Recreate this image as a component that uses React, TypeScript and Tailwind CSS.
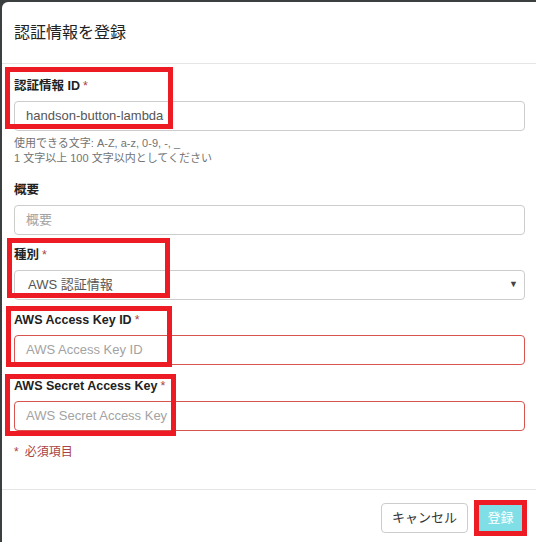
import React from "react";

const font = { fontFamily: '"Liberation Sans", "Noto Sans CJK JP", sans-serif' };

function Label({ text, required }: { text: string; required?: boolean }) {
  return (
    <div className="h-[18px] leading-[18px] text-[12.5px] font-bold text-[#222]">
      {text}
      {required && <span className="ml-[3px] font-normal text-[#a94442]">*</span>}
    </div>
  );
}

function Field({
  value,
  placeholder,
  invalid,
}: {
  value?: string;
  placeholder?: string;
  invalid?: boolean;
}) {
  return (
    <div
      className={`mt-[6px] h-[30px] rounded-[4px] border px-[11px] flex items-center text-[13px] ${
        invalid ? "border-[#d9534f]" : "border-[#cccccc]"
      } ${value ? "text-[#555]" : "text-[#a3a3a3]"}`}
    >
      {value ?? placeholder}
    </div>
  );
}

// red annotation frames drawn on top of the screenshot
const marks = [
  "left-[5px] top-[67px] w-[168px] h-[62px]",
  "left-[7px] top-[238px] w-[163px] h-[60px]",
  "left-[6px] top-[306px] w-[166px] h-[61px]",
  "left-[5px] top-[374px] w-[171px] h-[62px]",
  "left-[474px] top-[500px] w-[53px] h-[36px]",
];

export default function App() {
  return (
    <div
      className="relative w-[536px] h-[542px] overflow-hidden bg-[#3b3f3f] pl-[2px] pt-[2px] flex"
      style={font}
    >
      <div className="w-[536px] shrink-0 bg-white rounded-tl-[6px] flex flex-col">
        {/* header */}
        <div className="h-[62px] border-b border-[#e5e5e5] pl-[12px] flex items-center">
          <h1 className="text-[16px] text-[#222] font-normal">認証情報を登録</h1>
        </div>

        {/* body */}
        <div className="pl-[12px] pr-[13px] pt-[13px]">
          <Label text="認証情報 ID" required />
          <Field value="handson-button-lambda" />
          <div className="mt-[5px] text-[11px] leading-[15px] text-[#737373]">
            <div>使用できる文字: A-Z, a-z, 0-9, -, _</div>
            <div>1 文字以上 100 文字以内としてください</div>
          </div>

          <div className="mt-[15px]">
            <Label text="概要" />
            <Field placeholder="概要" />
          </div>

          <div className="mt-[11px]">
            <Label text="種別" required />
            <div className="mt-[6px] h-[30px] rounded-[4px] border border-[#cccccc] pl-[13px] pr-[6px] flex items-center justify-between text-[13px] text-[#555]">
              <span>AWS 認証情報</span>
              <span className="text-[9px] text-[#444]">▼</span>
            </div>
          </div>

          <div className="mt-[11px]">
            <Label text="AWS Access Key ID" required />
            <Field placeholder="AWS Access Key ID" invalid />
          </div>

          <div className="mt-[12px]">
            <Label text="AWS Secret Access Key" required />
            <Field placeholder="AWS Secret Access Key" invalid />
          </div>

          <div className="mt-[12px] text-[12px] leading-[18px] text-[#a94442]">
            <span className="mr-[6px]">*</span>必須項目
          </div>
        </div>

        {/* footer */}
        <div className="mt-[28px] border-t border-[#e5e5e5] pt-[13px] pr-[16px] flex justify-end gap-[11px]">
          <button className="h-[30px] px-[10px] rounded-[4px] border border-[#cccccc] bg-white text-[13px] text-[#333]">
            キャンセル
          </button>
          <button className="h-[30px] w-[43px] rounded-[3px] bg-[#80dfe6] text-[13px] text-white">
            登録
          </button>
        </div>
      </div>

      {marks.map((m, i) => (
        <div key={i} className={`absolute border-[5px] border-[#ed1c24] ${m}`} />
      ))}
    </div>
  );
}
